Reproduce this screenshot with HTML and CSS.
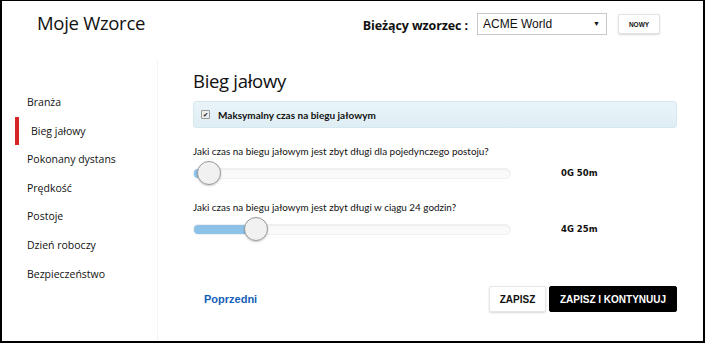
FILE: index.html
```html
<!DOCTYPE html>
<html>
<head>
<title>Moje Wzorce</title>
<meta http-equiv="content-type" content="text/html; charset=utf-8" />
<link rel="stylesheet" href="styles.css">
</head>
<body>
<div class="frame">
  <div class="header">
    <div class="brand">Moje Wzorce</div>
    <div class="current">
      <span class="current-label">Bieżący wzorzec :</span>
      <div class="select">ACME World <span class="caret">&#9660;</span></div>
      <button class="btn-new">NOWY</button>
    </div>
  </div>

  <div class="body">
    <ul class="nav">
      <li>Branża</li>
      <li class="active">Bieg jałowy</li>
      <li>Pokonany dystans</li>
      <li>Prędkość</li>
      <li>Postoje</li>
      <li>Dzień roboczy</li>
      <li>Bezpieczeństwo</li>
    </ul>

    <div class="main">
      <h2>Bieg jałowy</h2>

      <div class="option">
        <span class="check">&#10004;</span>
        <span>Maksymalny czas na biegu jałowym</span>
      </div>

      <div class="question">Jaki czas na biegu jałowym jest zbyt długi dla pojedynczego postoju?</div>
      <div class="slider-row">
        <div class="track">
          <div class="fill" style="width: 14px"></div>
          <div class="thumb" style="left: 3px"></div>
        </div>
        <div class="value">0G 50m</div>
      </div>

      <div class="question">Jaki czas na biegu jałowym jest zbyt długi w ciągu 24 godzin?</div>
      <div class="slider-row">
        <div class="track">
          <div class="fill" style="width: 62px"></div>
          <div class="thumb" style="left: 50px"></div>
        </div>
        <div class="value">4G 25m</div>
      </div>

      <div class="footer">
        <a href="#" class="prev">Poprzedni</a>
        <div class="actions">
          <button class="btn-save">ZAPISZ</button>
          <button class="btn-next">ZAPISZ I KONTYNUUJ</button>
        </div>
      </div>
    </div>
  </div>
</div>
</body>
</html>
```

FILE: styles.css
```css
body {margin: 0; background: #fff; font-family: "Open Sans", "DejaVu Sans", sans-serif; color: #111;}
.frame {width: 705px; height: 343px; box-sizing: border-box; border: 2px solid #000; border-top-width: 1px; display: flex; flex-direction: column; overflow: hidden;}

.header {height: 59px; display: flex; justify-content: space-between; align-items: flex-start; flex-shrink: 0;}
.brand {font-size: 18.5px; margin: 9px 0 0 35px; color: #111; letter-spacing: -0.3px;}
.current {display: flex; align-items: flex-start; margin: 12px 43px 0 0;}
.current-label {font-size: 12.5px; font-weight: bold; margin: 4px 9px 0 0; letter-spacing: -0.1px;}
.select {width: 130px; height: 22px; box-sizing: border-box; border: 1px solid #c9c9c9; font-family: "Liberation Sans", Arial, sans-serif; font-size: 12px; padding: 3px 0 0 5px; position: relative; color: #111;}
.caret {position: absolute; right: 6px; top: 6px; font-size: 7px;}
.btn-new {margin: 1px 0 0 11px; width: 42px; height: 20px; background: #fff; border: 1px solid #e2e2e2; border-radius: 2px; box-shadow: 0 1px 2px rgba(0,0,0,0.15); font-family: "Liberation Sans", Arial, sans-serif; font-size: 6.5px; font-weight: bold; padding: 0; color: #111;}

.body {display: flex; flex: 1;}
.nav {list-style: none; margin: 0; padding: 28px 0 0 0; width: 155px; border-right: 1px solid #f4f4f4; font-size: 10.5px; flex-shrink: 0;}
.nav li {height: 28.6px; line-height: 28.6px; padding-left: 25px; color: #111;}
.nav li.active {border-left: 4px solid #d42424; margin-left: 13px; padding-left: 12px;}

.main {flex: 1; padding: 10px 26px 0 35px; display: flex; flex-direction: column;}
.main h2 {font-size: 18.5px; font-weight: normal; margin: 0 0 9px 0; line-height: 22px; letter-spacing: -0.3px;}
.option {height: 27px; box-sizing: border-box; border: 1px solid #d6e8ef; border-radius: 3px; background: linear-gradient(#e9f4f8, #dfeef4); display: flex; align-items: center; padding-left: 7px; font-family: Lato, "Open Sans", sans-serif; font-weight: bold; font-size: 10px;}
.check {display: inline-block; width: 7px; height: 7px; border: 1px solid #999; border-radius: 1px; background: #eee; font-size: 6px; line-height: 7px; text-align: center; margin-right: 8px; color: #333;}

.question {font-family: Lato, "Open Sans", sans-serif; font-size: 9.9px; margin-top: 16px; line-height: 14px;}
.question + .slider-row + .question {margin-top: 14px;}
.slider-row {display: flex; align-items: center; margin-top: 2px; height: 26px;}
.track {position: relative; width: 316px; height: 9px; border-radius: 5px; background: #fafafa; box-shadow: inset 0 1px 2px rgba(0,0,0,0.06); border: 1px solid #f0f0f0;}
.fill {position: absolute; left: 0; top: 0; bottom: 0; background: #8cc2e8; border-radius: 4px 0 0 4px;}
.thumb {position: absolute; top: -8px; width: 22px; height: 22px; border-radius: 50%; background: #f1f1f1; border: 1px solid #9a9a9a; box-shadow: 0 1px 2px rgba(0,0,0,0.2);}
.value {margin-left: 50px; font-family: "DejaVu Sans", Verdana, sans-serif; font-weight: bold; font-size: 8.5px;}

.footer {display: flex; justify-content: space-between; align-items: center; margin-top: 44px;}
.prev {color: #1360b8; font-family: "Liberation Sans", Arial, sans-serif; font-weight: bold; font-size: 11px; text-decoration: none; margin-left: 11px;}
.actions {display: flex; gap: 3px;}
.btn-save, .btn-next {height: 26px; border-radius: 2px; font-family: "Liberation Sans", Arial, sans-serif; font-weight: bold; font-size: 10px; padding: 0;}
.btn-save {width: 57px; background: #fff; color: #111; border: 1px solid #e6e6e6; box-shadow: 0 1px 2px rgba(0,0,0,0.15);}
.btn-next {width: 128px; background: #000; color: #fff; border: 1px solid #000;}
```
